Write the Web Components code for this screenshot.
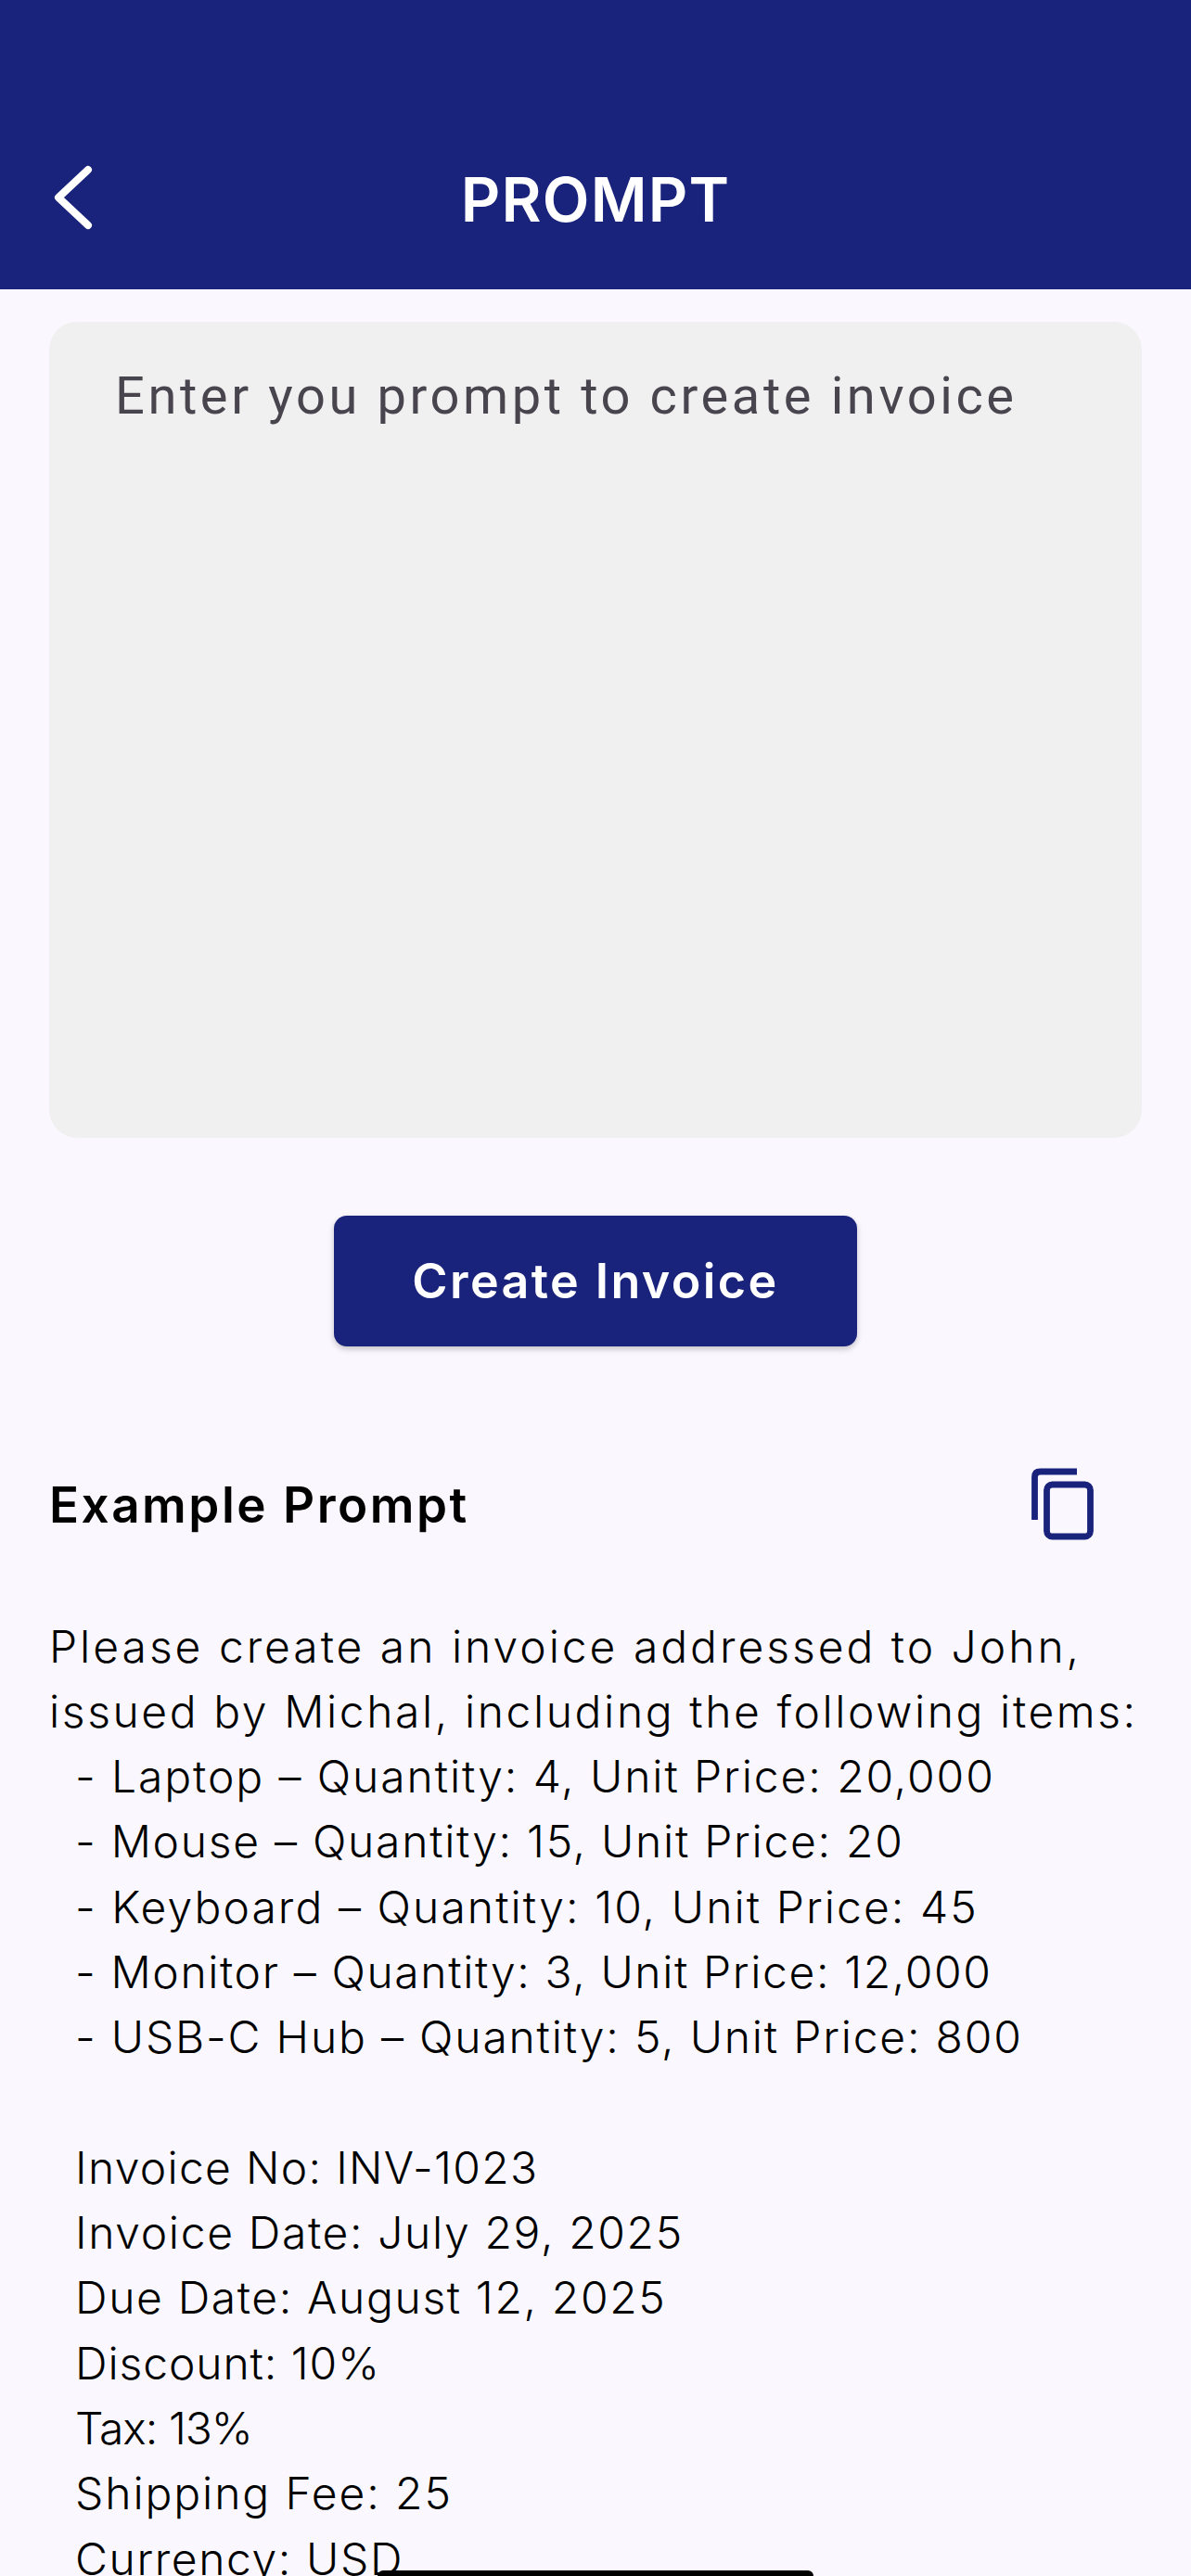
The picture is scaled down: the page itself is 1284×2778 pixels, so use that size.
<!doctype html>
<html><head><meta charset="utf-8"><style>
html,body{margin:0;padding:0;background:#FAF8FE}
body{width:1284px;height:2778px;overflow:hidden;position:relative;font-family:Inter,"Liberation Sans",sans-serif}
.l{white-space:nowrap}.i{padding-left:28px}
</style></head><body>
<prompt-screen>
<app-bar>PROMPT</app-bar>
<prompt-field>Enter you prompt to create invoice</prompt-field>
<action-button>Create Invoice</action-button>
<example-prompt heading="Example Prompt">
<div class="l" style="letter-spacing:2.97px">Please create an invoice addressed to John,</div>
<div class="l" style="letter-spacing:2.58px">issued by Michal, including the following items:</div>
<div class="l i" style="letter-spacing:1.9px">- Laptop – Quantity: 4, Unit Price: 20,000</div>
<div class="l i" style="letter-spacing:1.72px">- Mouse – Quantity: 15, Unit Price: 20</div>
<div class="l i" style="letter-spacing:2.07px">- Keyboard – Quantity: 10, Unit Price: 45</div>
<div class="l i" style="letter-spacing:1.62px">- Monitor – Quantity: 3, Unit Price: 12,000</div>
<div class="l i" style="letter-spacing:1.8px">- USB-C Hub – Quantity: 5, Unit Price: 800</div>
<div class="l i">&nbsp;</div>
<div class="l i" style="letter-spacing:1.3px">Invoice No: INV-1023</div>
<div class="l i" style="letter-spacing:1.64px">Invoice Date: July 29, 2025</div>
<div class="l i" style="letter-spacing:1.63px">Due Date: August 12, 2025</div>
<div class="l i" style="letter-spacing:.9px">Discount: 10%</div>
<div class="l i" style="letter-spacing:-1px">Tax: 13%</div>
<div class="l i" style="letter-spacing:1.9px">Shipping Fee: 25</div>
<div class="l i" style="letter-spacing:1.6px">Currency: USD</div>
</example-prompt>
</prompt-screen>
<home-bar></home-bar>
<script>
function def(name,html){customElements.define(name,class extends HTMLElement{constructor(){super();this.attachShadow({mode:'open'}).innerHTML=typeof html==='function'?html(this):html;}});}
def('prompt-screen',`<style>:host{display:flex;flex-direction:column;height:2778px;overflow:hidden}::slotted(*){flex:none}</style><slot></slot>`);
def('app-bar',`<style>:host{display:flex;align-items:center;justify-content:center;position:relative;box-sizing:border-box;height:312px;padding-top:117px;background:#19237C;color:#fff;font:600 66px/98px Inter,sans-serif;letter-spacing:1.2px}
svg{position:absolute;left:40px;top:165px}</style>
<svg width="80" height="100" viewBox="0 0 80 100" fill="none"><path d="M55 18 L23 48 L55 78" stroke="#fff" stroke-width="8" stroke-linecap="round" stroke-linejoin="round"/></svg><slot></slot>`);
def('prompt-field',`<style>:host{display:block;box-sizing:border-box;margin:35px 53px 0;height:880px;padding:47px 71px;background:#F1F0F0;border-radius:30px;color:#49454F;font:400 56px/66px Roboto,sans-serif;letter-spacing:3.6px;white-space:nowrap}</style><slot></slot>`);
def('action-button',`<style>:host{display:flex;align-self:center;align-items:center;justify-content:center;box-sizing:border-box;margin-top:84px;width:564px;height:141px;background:#19237C;border-radius:14px;color:#fff;font:600 52px/60px Inter,sans-serif;letter-spacing:2.4px;box-shadow:0 3px 6px rgba(0,0,0,.22)}</style><slot></slot>`);
def('example-prompt',el=>`<style>:host{display:block;padding:0 0 0 53px;margin-top:109px;color:#000;font:300 48px/70.3px Inter,sans-serif}
.row{display:flex;align-items:center;justify-content:space-between;height:120px;padding-right:84px;margin-bottom:59.5px}
h2{margin:0;padding-top:4px;font:600 53px/60px Inter,sans-serif;letter-spacing:2.5px}
svg{display:block}
</style><div class="row"><h2>${el.getAttribute('heading')}</h2><svg width="120" height="120" viewBox="0 0 120 120" fill="none" stroke="#19237C" stroke-width="6.8"><path d="M35.5 78 V32 Q35.5 26 41.5 26 H81"/><rect x="48.5" y="40" width="47" height="56" rx="6"/></svg></div><slot></slot>`);
def('home-bar',`<style>:host{display:block;position:absolute;left:407px;top:2772px;width:470px;height:6px;background:#000;border-radius:6px 6px 0 0}</style>`);
</script>
</body></html>
